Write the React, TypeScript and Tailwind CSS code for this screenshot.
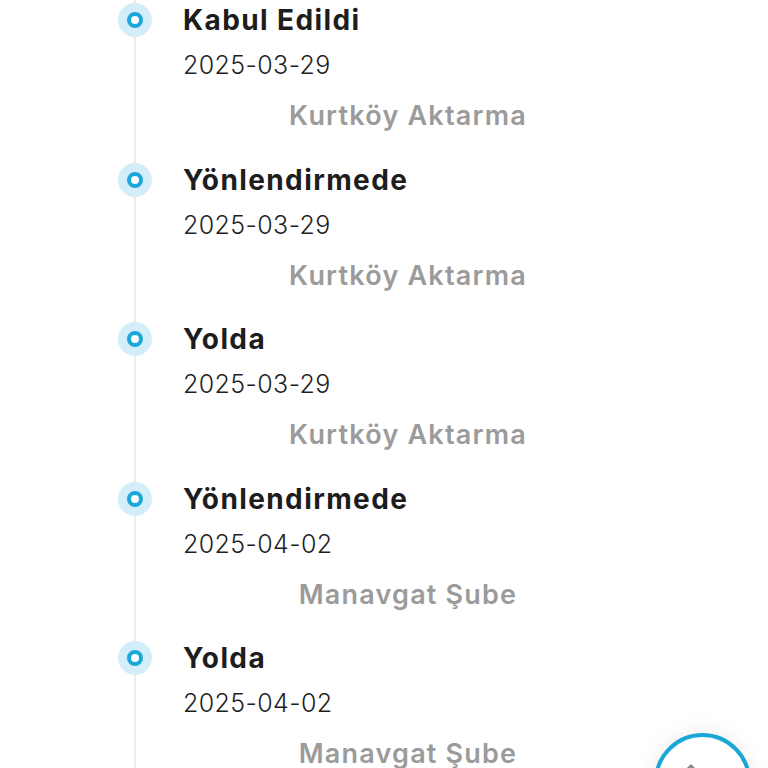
import { ChevronUp } from "lucide-react";

type TrackingEvent = {
  status: string;
  date: string;
  location: string;
};

const EVENTS: TrackingEvent[] = [
  { status: "Kabul Edildi", date: "2025-03-29", location: "Kurtköy Aktarma" },
  { status: "Yönlendirmede", date: "2025-03-29", location: "Kurtköy Aktarma" },
  { status: "Yolda", date: "2025-03-29", location: "Kurtköy Aktarma" },
  { status: "Yönlendirmede", date: "2025-04-02", location: "Manavgat Şube" },
  { status: "Yolda", date: "2025-04-02", location: "Manavgat Şube" },
];

function TimelineDot() {
  return (
    <div className="flex h-[34px] w-[34px] items-center justify-center rounded-full bg-[#d3eef9]">
      <div className="h-[16px] w-[16px] rounded-full border-[4px] border-[#1ba9d9] bg-white" />
    </div>
  );
}

function TimelineItem({ event }: { event: TrackingEvent }) {
  return (
    <div className="flex h-[159.5px] items-start">
      <div className="flex w-[34px] shrink-0 justify-center pt-[3px]">
        <TimelineDot />
      </div>
      <div className="ml-[31px] flex w-[450px] flex-col">
        <p className="m-0 h-[40px] text-[28px] font-bold leading-[40px] tracking-[1.4px] text-[#1d1d1d]">{event.status}</p>
        <p className="m-0 mt-[6px] h-[38px] text-[25px] font-light leading-[38px] tracking-[0.4px] text-[#1f1f1f]">{event.date}</p>
        <p className="m-0 mt-[12px] h-[40px] text-center text-[27px] font-semibold leading-[40px] tracking-[1.2px] text-[#9b9b9b]">
          {event.location}
        </p>
      </div>
    </div>
  );
}

export default function App() {
  return (
    <div className="relative h-[768px] w-[768px] overflow-hidden bg-white font-['Inter',sans-serif]">
      <div className="relative flex flex-col pl-[118px]">
        <div className="absolute bottom-0 left-[134px] top-0 w-[2px] bg-[#ececec]" />
        <div className="relative flex flex-col">
          {EVENTS.map((event, i) => (
            <TimelineItem key={i} event={event} />
          ))}
        </div>
      </div>

      <button className="absolute left-[654px] top-[733px] flex h-[97px] w-[97px] items-start justify-center rounded-full border-[4px] border-[#1aa7d7] bg-white pt-[18px] shadow-[0_0_24px_rgba(0,0,0,0.08)]">
        <ChevronUp className="mr-[24px] h-[28px] w-[28px] text-[#8a8a8a]" strokeWidth={2} />
      </button>
    </div>
  );
}
